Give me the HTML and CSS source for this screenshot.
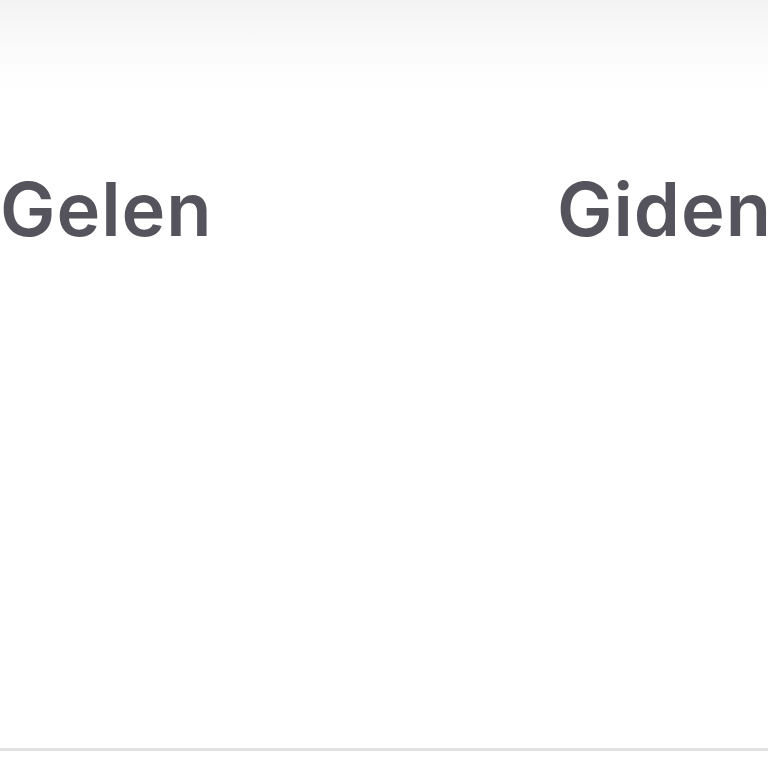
FILE: index.html
```html
<!DOCTYPE html>
<html lang="tr">
<head>
<meta charset="utf-8">
<title>Gelen / Giden</title>
<link rel="stylesheet" href="styles.css">
</head>
<body>
<div class="page">
  <div class="topbar"></div>
  <div class="tabs">
    <div class="tab">Gelen</div>
    <div class="tab">Giden</div>
  </div>
  <div class="content"></div>
  <div class="divider"></div>
</div>
</body>
</html>
```

FILE: styles.css
```css
html, body {
  margin: 0;
  padding: 0;
  background: #ffffff;
  overflow: hidden;
}
.page {
  width: 768px;
  height: 768px;
  display: flex;
  flex-direction: column;
  overflow: hidden;
}
.topbar {
  height: 92px;
  flex: none;
  background: linear-gradient(to bottom, #f3f3f3 0%, #f8f8f8 35%, #fdfdfd 75%, #ffffff 100%);
}
.tabs {
  display: flex;
  padding: 79px 0 0 0;
  white-space: nowrap;
}
.tab {
  font-family: "Inter", "Noto Sans", sans-serif;
  font-weight: 600;
  font-size: 74px;
  line-height: 76px;
  color: #55545c;
  letter-spacing: 1px;
}
.tab:first-child {
  width: 557px;
  flex: none;
}
.content {
  flex: 1;
}
.divider {
  height: 3px;
  background: #e2e2e2;
  flex: none;
  margin-bottom: 17px;
}
```
